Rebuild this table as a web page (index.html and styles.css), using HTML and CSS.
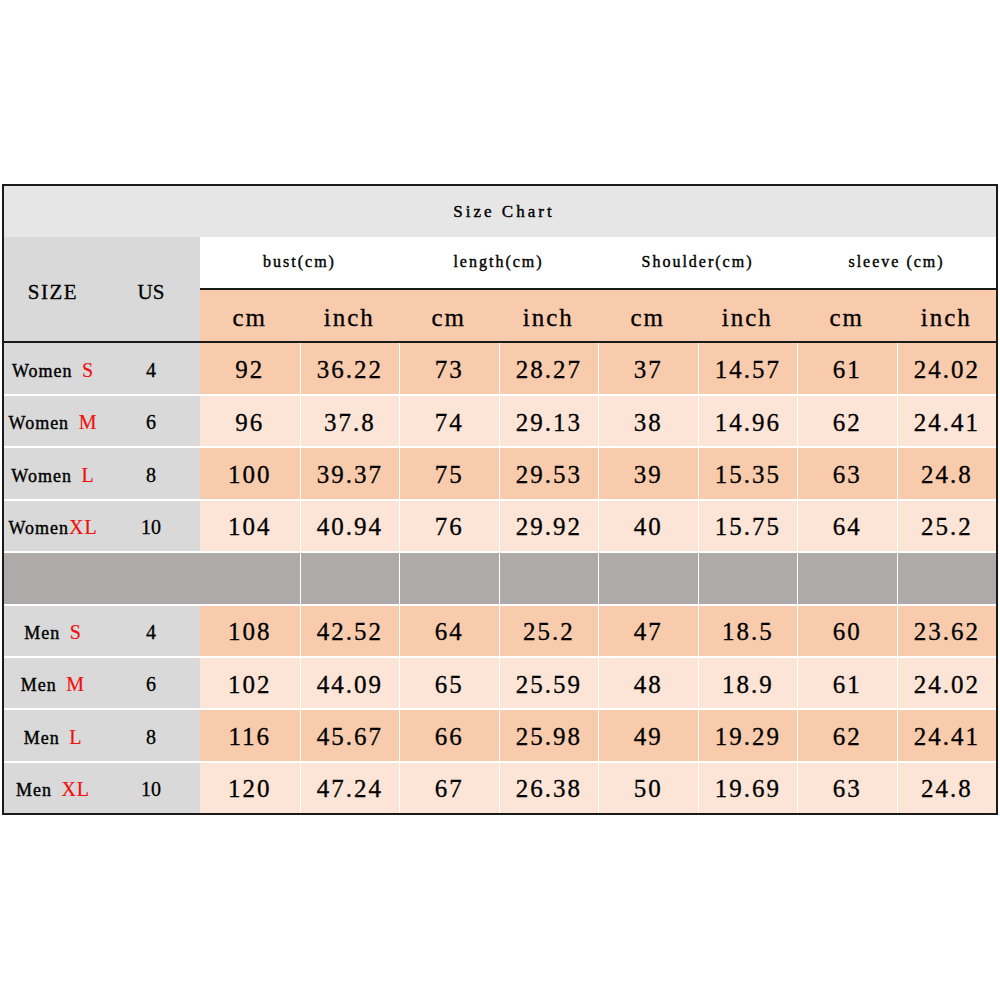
FILE: index.html
```html
<!DOCTYPE html>
<html>
<head>
<meta charset="utf-8">
<link rel="stylesheet" href="styles.css">
</head>
<body>
<div class="chart">
  <div class="title">Size Chart</div>
  <div class="head">
    <div class="hleft hsize">SIZE</div>
    <div class="hleft hus">US</div>
    <div class="grp">bust(cm)</div>
    <div class="grp">length(cm)</div>
    <div class="grp">Shoulder(cm)</div>
    <div class="grp">sleeve (cm)</div>
    <div class="unit">cm</div><div class="unit">inch</div>
    <div class="unit">cm</div><div class="unit">inch</div>
    <div class="unit">cm</div><div class="unit">inch</div>
    <div class="unit">cm</div><div class="unit">inch</div>
  </div>

  <div class="row dark first">
    <div class="lab"><span>Women <span class="sz">S</span></span></div><div class="us">4</div>
    <div class="c">92</div><div class="c">36.22</div><div class="c">73</div><div class="c">28.27</div>
    <div class="c">37</div><div class="c">14.57</div><div class="c">61</div><div class="c">24.02</div>
  </div>
  <div class="row light">
    <div class="lab"><span>Women <span class="sz">M</span></span></div><div class="us">6</div>
    <div class="c">96</div><div class="c">37.8</div><div class="c">74</div><div class="c">29.13</div>
    <div class="c">38</div><div class="c">14.96</div><div class="c">62</div><div class="c">24.41</div>
  </div>
  <div class="row dark">
    <div class="lab"><span>Women <span class="sz">L</span></span></div><div class="us">8</div>
    <div class="c">100</div><div class="c">39.37</div><div class="c">75</div><div class="c">29.53</div>
    <div class="c">39</div><div class="c">15.35</div><div class="c">63</div><div class="c">24.8</div>
  </div>
  <div class="row light">
    <div class="lab"><span>Women<span class="sz">XL</span></span></div><div class="us">10</div>
    <div class="c">104</div><div class="c">40.94</div><div class="c">76</div><div class="c">29.92</div>
    <div class="c">40</div><div class="c">15.75</div><div class="c">64</div><div class="c">25.2</div>
  </div>
  <div class="row sep">
    <div class="merge"></div>
    <div class="c"></div><div class="c"></div><div class="c"></div><div class="c"></div>
    <div class="c"></div><div class="c"></div><div class="c"></div>
  </div>
  <div class="row dark">
    <div class="lab"><span>Men <span class="sz">S</span></span></div><div class="us">4</div>
    <div class="c">108</div><div class="c">42.52</div><div class="c">64</div><div class="c">25.2</div>
    <div class="c">47</div><div class="c">18.5</div><div class="c">60</div><div class="c">23.62</div>
  </div>
  <div class="row light">
    <div class="lab"><span>Men <span class="sz">M</span></span></div><div class="us">6</div>
    <div class="c">102</div><div class="c">44.09</div><div class="c">65</div><div class="c">25.59</div>
    <div class="c">48</div><div class="c">18.9</div><div class="c">61</div><div class="c">24.02</div>
  </div>
  <div class="row dark">
    <div class="lab"><span>Men <span class="sz">L</span></span></div><div class="us">8</div>
    <div class="c">116</div><div class="c">45.67</div><div class="c">66</div><div class="c">25.98</div>
    <div class="c">49</div><div class="c">19.29</div><div class="c">62</div><div class="c">24.41</div>
  </div>
  <div class="row light">
    <div class="lab"><span>Men <span class="sz">XL</span></span></div><div class="us">10</div>
    <div class="c">120</div><div class="c">47.24</div><div class="c">67</div><div class="c">26.38</div>
    <div class="c">50</div><div class="c">19.69</div><div class="c">63</div><div class="c">24.8</div>
  </div>
</div>
</body>
</html>
```

FILE: styles.css
```css
html, body {
  margin: 0;
  padding: 0;
  background: #ffffff;
}
body {
  font-family: "Liberation Serif", serif;
  color: #000;
}
.chart {
  margin: 184px 0 0 2px;
  width: 996px;
  border: 2px solid #1a1a1a;
  box-sizing: border-box;
}
.title {
  height: 51px;
  background: #e7e6e6;
  display: flex;
  align-items: center;
  justify-content: center;
  font-size: 17px;
  letter-spacing: 3px;
  padding-left: 8px;
  -webkit-text-stroke: 0.4px #000;
}
.head {
  display: grid;
  grid-template-columns: 98px 98px repeat(8, 1fr);
  grid-template-rows: 53px 51px;
  border-bottom: 2px solid #1a1a1a;
}
.hleft {
  grid-row: 1 / 3;
  background: #d9d9d9;
  display: flex;
  align-items: center;
  justify-content: center;
  font-size: 21px;
  letter-spacing: 1.5px;
  padding-top: 6px;
  -webkit-text-stroke: 0.3px #000;
}
.hsize { grid-column: 1; }
.hus { grid-column: 2; letter-spacing: 0; }
.grp {
  grid-column: span 2;
  background: #fff;
  border-bottom: 2px solid #1a1a1a;
  display: flex;
  align-items: center;
  justify-content: center;
  font-size: 16px;
  letter-spacing: 2px;
  padding-bottom: 2px;
  -webkit-text-stroke: 0.4px #000;
}
.unit {
  background: #f8cbad;
  display: flex;
  align-items: center;
  justify-content: center;
  font-size: 25px;
  letter-spacing: 2px;
  padding-top: 4px;
  -webkit-text-stroke: 0.3px #000;
}
.row {
  display: grid;
  grid-template-columns: 98px 98px repeat(8, 1fr);
  height: 52.4px;
  box-sizing: border-box;
  border-top: 2px solid #fff;
}
.row.first {
  height: 51px;
  border-top: 0;
}
.lab, .us {
  background: #d9d9d9;
  display: flex;
  align-items: center;
  justify-content: center;
  padding-top: 3px;
}
.lab {
  font-size: 18px;
  letter-spacing: 1px;
  word-spacing: 4px;
  white-space: nowrap;
  -webkit-text-stroke: 0.4px #000;
}
.sz {
  color: #f01010;
  font-size: 20px;
  -webkit-text-stroke: 0.2px #f01010;
}
.us { font-size: 20px; -webkit-text-stroke: 0.3px #000; }
.c {
  display: flex;
  align-items: center;
  justify-content: center;
  font-size: 25px;
  letter-spacing: 2px;
  padding-top: 3px;
  -webkit-text-stroke: 0.3px #000;
}
.c + .c { border-left: 1px solid #fff; }
.dark .c { background: #f8cbad; }
.light .c { background: #fce4d6; }
.sep .merge {
  grid-column: 1 / 4;
  background: #aeaaaa;
}
.sep .c { background: #aeaaaa; border-left: 1px solid #fff; }
```
